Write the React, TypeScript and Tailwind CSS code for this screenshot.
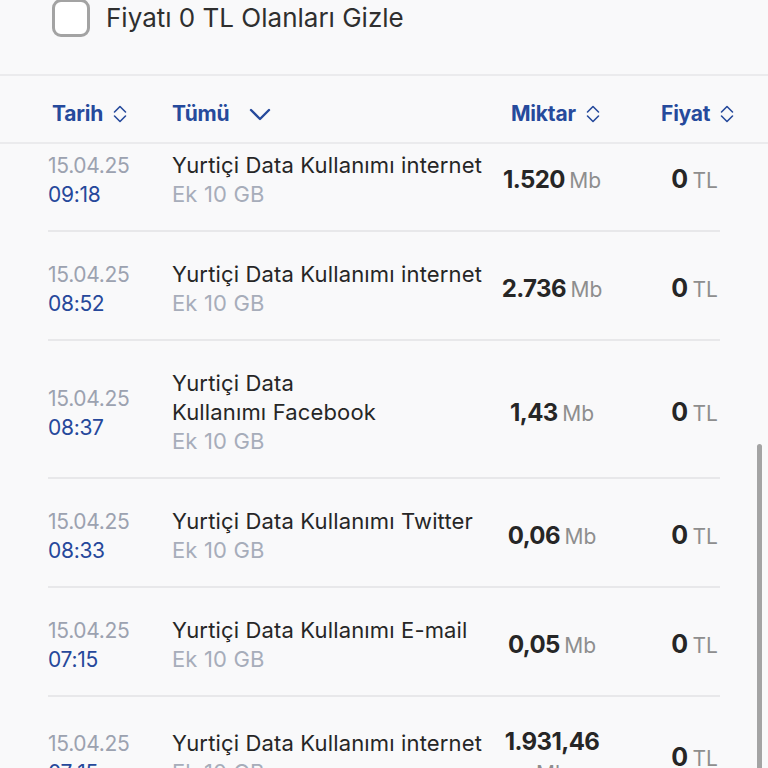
import React from "react";

type Row = {
  date: string;
  time: string;
  title: string[];
  sub: string;
  amount: string;
  unit: string;
  wrapUnit?: boolean;
};

const ROWS: Row[] = [
  { date: "15.04.25", time: "09:18", title: ["Yurtiçi Data Kullanımı internet"], sub: "Ek 10 GB", amount: "1.520", unit: "Mb" },
  { date: "15.04.25", time: "08:52", title: ["Yurtiçi Data Kullanımı internet"], sub: "Ek 10 GB", amount: "2.736", unit: "Mb" },
  { date: "15.04.25", time: "08:37", title: ["Yurtiçi Data", "Kullanımı Facebook"], sub: "Ek 10 GB", amount: "1,43", unit: "Mb" },
  { date: "15.04.25", time: "08:33", title: ["Yurtiçi Data Kullanımı Twitter"], sub: "Ek 10 GB", amount: "0,06", unit: "Mb" },
  { date: "15.04.25", time: "07:15", title: ["Yurtiçi Data Kullanımı E-mail"], sub: "Ek 10 GB", amount: "0,05", unit: "Mb" },
  { date: "15.04.25", time: "07:15", title: ["Yurtiçi Data Kullanımı internet"], sub: "Ek 10 GB", amount: "1.931,46", unit: "Mb", wrapUnit: true },
];

function SortIcon() {
  return (
    <svg width="14" height="18" viewBox="0 0 14 18" fill="none" className="text-[#264a9c]">
      <path d="M1.5 7 7 1.5 12.5 7M1.5 11 7 16.5 12.5 11" stroke="currentColor" strokeWidth="1.6" strokeLinecap="round" strokeLinejoin="round" />
    </svg>
  );
}

function SortHeader({ label }: { label: string }) {
  return (
    <div className="flex items-center gap-[10px]">
      <span className="text-[21px] font-bold tracking-[-0.2px] text-[#264a9c]">{label}</span>
      <SortIcon />
    </div>
  );
}

export default function App() {
  return (
    <div
      className="relative h-screen w-full overflow-hidden bg-[#f9f9fa] text-[#262626]"
      style={{ fontFamily: "Inter, 'Noto Sans', sans-serif" }}
    >
      {/* filter */}
      <div className="h-[76px] pl-[52px]">
        <div className="flex items-center gap-[16px] -mt-[2px]">
          <div className="w-[38px] h-[38px] rounded-[9px] border-[3px] border-[#a3a3a3] bg-white" />
          <span className="text-[26px] text-[#2f2f2f]">Fiyatı 0 TL Olanları Gizle</span>
        </div>
      </div>

      {/* table header */}
      <div className="flex items-center h-[70px] border-y-2 border-[#ebebed] pl-[52px] pt-[10px]">
        <div className="w-[120px]">
          <SortHeader label="Tarih" />
        </div>
        <div className="flex items-center gap-[20px] w-[339px]">
          <span className="text-[21px] font-bold tracking-[-0.2px] text-[#264a9c]">Tümü</span>
          <svg width="22" height="13" viewBox="0 0 22 13" fill="none" className="text-[#264a9c]">
            <path d="M2 2 11 11 20 2" stroke="currentColor" strokeWidth="2.4" strokeLinecap="round" strokeLinejoin="round" />
          </svg>
        </div>
        <div className="w-[150px]">
          <SortHeader label="Miktar" />
        </div>
        <SortHeader label="Fiyat" />
      </div>

      {/* rows */}
      <div className="overflow-hidden">
        <div className="-mt-[21px] px-[48px]">
          {ROWS.map((r, i) => (
            <div
              key={i}
              className="flex items-center w-[672px] pt-[28px] pb-[21px] border-b-2 border-[#e8e8ea] leading-[29px]"
            >
              <div className="w-[124px] flex flex-col text-[21px] tracking-[-0.3px]">
                <span className="text-[#9ca2b0]">{r.date}</span>
                <span className="text-[#26489b]">{r.time}</span>
              </div>
              <div className="w-[324px] flex flex-col text-[22px] tracking-[0.15px]">
                {r.title.map((t) => (
                  <span key={t} className="text-[#262626] whitespace-nowrap">{t}</span>
                ))}
                <span className="text-[#a7adba]">{r.sub}</span>
              </div>
              <div className="w-[112px] text-center pt-[2px]">
                <span className="text-[24px] font-bold tracking-[-0.6px] text-[#262626]">{r.amount}</span>
                {r.wrapUnit ? <br /> : " "}
                <span className="text-[21px] text-[#8e8e8e]">{r.unit}</span>
              </div>
              <div className="flex-1 text-right pr-[2px] pt-[2px]">
                <span className="text-[25px] font-bold text-[#262626]">0</span>{" "}
                <span className="text-[21px] text-[#8e8e8e]">TL</span>
              </div>
            </div>
          ))}
        </div>
      </div>

      {/* scroll indicator */}
      <div className="absolute right-[6px] top-[444px] w-[5px] h-[340px] rounded-full bg-[#a4a4a4]" />
    </div>
  );
}
